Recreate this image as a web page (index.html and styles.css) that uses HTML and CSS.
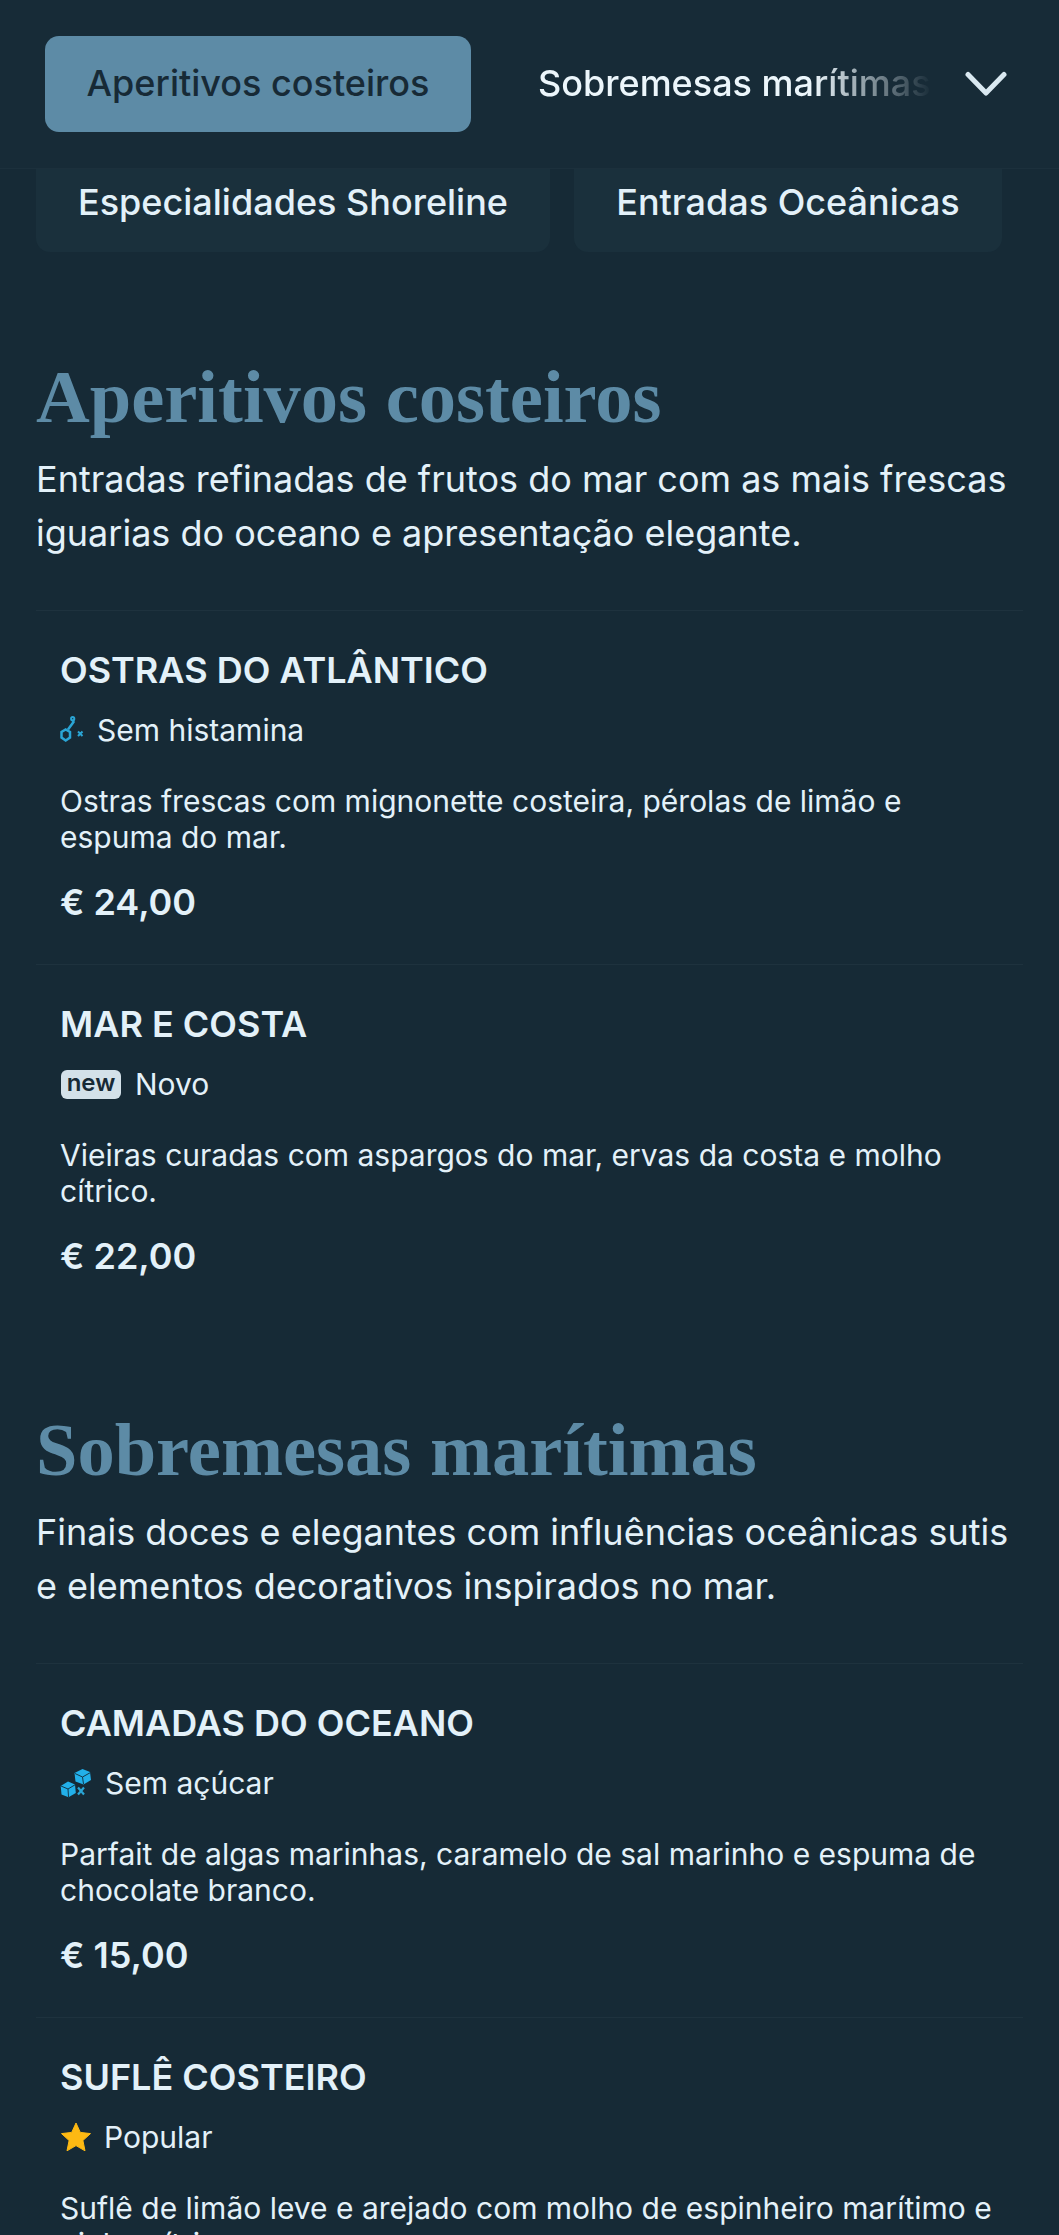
FILE: index.html
```html
<!DOCTYPE html>
<html lang="pt">
<head>
<meta charset="utf-8">
<title>Menu</title>
<link rel="stylesheet" href="styles.css">
</head>
<body>
<header class="topbar">
  <a class="tab tab-active">Aperitivos costeiros</a>
  <div class="tab-scroll"><a class="tab">Sobremesas marítimas</a></div>
  <svg class="chevron" viewBox="0 0 42 26" width="42" height="26"><path d="M3 3.500 L21 22 L39 3.500" fill="none" stroke="#d9e8f0" stroke-width="5" stroke-linecap="round" stroke-linejoin="round"/></svg>
</header>
<nav class="cats">
  <a class="cat cat-wide">Especialidades Shoreline</a>
  <a class="cat">Entradas Oceânicas</a>
</nav>
<main class="menu">
  <section class="section">
    <h2>Aperitivos costeiros</h2>
    <p class="lead">Entradas refinadas de frutos do mar com as mais frescas iguarias do oceano e apresentação elegante.</p>
    <article class="item">
      <h3>OSTRAS DO ATLÂNTICO</h3>
      <div class="tag">
        <svg class="ic" width="26" height="28" viewBox="0 0 26 28" fill="none" stroke="#2aa5d5" stroke-width="2.500"><path d="M5.700 13.500 L10 16 L10 21.500 L5.700 24.500 L1.500 21.500 L1.500 16 Z"/><path d="M8 13.500 L13.500 6 L12.800 4"/><circle cx="12.700" cy="2.700" r="1.600" stroke-width="2"/><path d="M18 15.500 l4.500 4.500 M22.500 15.500 l-4.500 4.500" stroke-width="2"/></svg>
        <span>Sem histamina</span>
      </div>
      <p class="desc">Ostras frescas com mignonette costeira, pérolas de limão e espuma do mar.</p>
      <div class="price">€ 24,00</div>
    </article>
    <article class="item">
      <h3>MAR E COSTA</h3>
      <div class="tag tag-new">
        <b class="new">new</b>
        <span>Novo</span>
      </div>
      <p class="desc">Vieiras curadas com aspargos do mar, ervas da costa e molho cítrico.</p>
      <div class="price">€ 22,00</div>
    </article>
  </section>
  <section class="section section-next">
    <h2>Sobremesas marítimas</h2>
    <p class="lead">Finais doces e elegantes com influências oceânicas sutis e elementos decorativos inspirados no mar.</p>
    <article class="item">
      <h3>CAMADAS DO OCEANO</h3>
      <div class="tag tag-wide">
        <svg class="ic" width="32" height="30" viewBox="0 0 32 30"><path d="M22.500 1 L30 4 L31 12 L23.500 16.500 L15.500 13.500 L14.500 5 Z" fill="#22b0ea"/><path d="M15 5.500 L22.500 9 L23.500 16 M22.500 9 L30.500 4.500" fill="none" stroke="#12384a" stroke-width="1"/><path d="M8 13.500 L15 16.500 L15.800 25 L8.500 29.300 L1.500 26.500 L0.700 18 Z" fill="#22b0ea"/><path d="M1 18 L8 21 L8.500 29 M8 21 L15 16.800" fill="none" stroke="#12384a" stroke-width="1"/><path d="M18 19.500 l6 7 M24 19.500 l-6 7" stroke="#2aa5d5" stroke-width="2.200"/></svg>
        <span>Sem açúcar</span>
      </div>
      <p class="desc">Parfait de algas marinhas, caramelo de sal marinho e espuma de chocolate branco.</p>
      <div class="price">€ 15,00</div>
    </article>
    <article class="item">
      <h3>SUFLÊ COSTEIRO</h3>
      <div class="tag tag-star">
        <svg class="ic" width="32" height="30" viewBox="0 0 32 30"><path d="M16 1 L20.300 10.400 L30.500 11.600 L22.900 18.500 L25 28.800 L16 23.600 L7 28.800 L9.100 18.500 L1.500 11.600 L11.700 10.400 Z" fill="#fdb913" stroke="#fdb913" stroke-linejoin="round"/></svg>
        <span>Popular</span>
      </div>
      <p class="desc">Suflê de limão leve e arejado com molho de espinheiro marítimo e ninho cítrico.</p>
      <div class="price">€ 16,00</div>
    </article>
  </section>
</main>
</body>
</html>
```
FILE: styles.css
```css
* { box-sizing: border-box; }
html, body { margin: 0; padding: 0; }
body {
  height: 2235px;
  overflow: hidden;
  background: #162a36;
  color: #e3f1f9;
  font-family: "Inter", "Liberation Sans", sans-serif;
}
.topbar {
  height: 169px;
  display: flex;
  align-items: flex-start;
  padding: 36px 51px 0 45px;
  background: #172b37;
  border-bottom: 1px solid #1c303c;
}
.tab {
  display: block;
  font-size: 36px;
  line-height: 94px;
  white-space: nowrap;
  color: #ecf6fb;
  font-weight: 500;
}
.tab-active {
  width: 426px;
  height: 96px;
  flex: none;
  text-align: center;
  border-radius: 14px;
  background: #5d8ba6;
  color: #172a36;
}
.tab-scroll {
  width: 394px;
  margin: 0 33px 0 67px;
  overflow: hidden;
  flex: none;
  -webkit-mask-image: linear-gradient(to right, #000 70%, transparent 100%);
  mask-image: linear-gradient(to right, #000 70%, transparent 100%);
}
.chevron { margin-top: 35px; flex: none; }
.cats {
  display: flex;
  gap: 24px;
  padding: 0 36px;
  height: 83px;
}
.cat {
  display: block;
  width: 428px;
  height: 83px;
  text-align: center;
  font-size: 36px;
  line-height: 67px;
  font-weight: 500;
  color: #e3f1f9;
  background: #1a303c;
  border-radius: 0 0 14px 14px;
}
.cat-wide { width: 514px; }
.menu { padding: 0 36px; }
.section { padding-top: 103px; }
.section-next { padding-top: 90px; }
h2 {
  margin: 0;
  font-family: "Liberation Serif", serif;
  font-weight: 700;
  font-size: 74.500px;
  line-height: 84px;
  color: #5d8ba6;
}
.lead {
  margin: 13px 0 50px;
  font-size: 36px;
  line-height: 54px;
  color: #e3f1f9;
}
.item {
  height: 354px;
  padding: 35px 24px 0;
  border-top: 1px solid #1e323e;
}
h3 {
  margin: 0;
  font-size: 36px;
  line-height: 48px;
  font-weight: 600;
  color: #e3f1f9;
}
.tag {
  display: flex;
  align-items: center;
  height: 40px;
  margin-top: 16px;
  gap: 11px;
  font-size: 30px;
  color: #e3f1f9;
}
.tag-new { gap: 14px; }
.tag-wide { gap: 13px; }
.tag-star { gap: 12px; }
.ic { flex: none; }
.new {
  display: block;
  width: 60px;
  height: 29px;
  margin-left: 1px;
  border-radius: 6px;
  background: #d3e1e9;
  color: #172a36;
  font-size: 24px;
  line-height: 26px;
  font-weight: 600;
  text-align: center;
}
.desc {
  margin: 33px 0 0;
  font-size: 30px;
  line-height: 36px;
  color: #e3f1f9;
}
.price {
  margin-top: 23px;
  font-size: 36px;
  line-height: 48px;
  font-weight: 600;
  color: #e3f1f9;
}
```
